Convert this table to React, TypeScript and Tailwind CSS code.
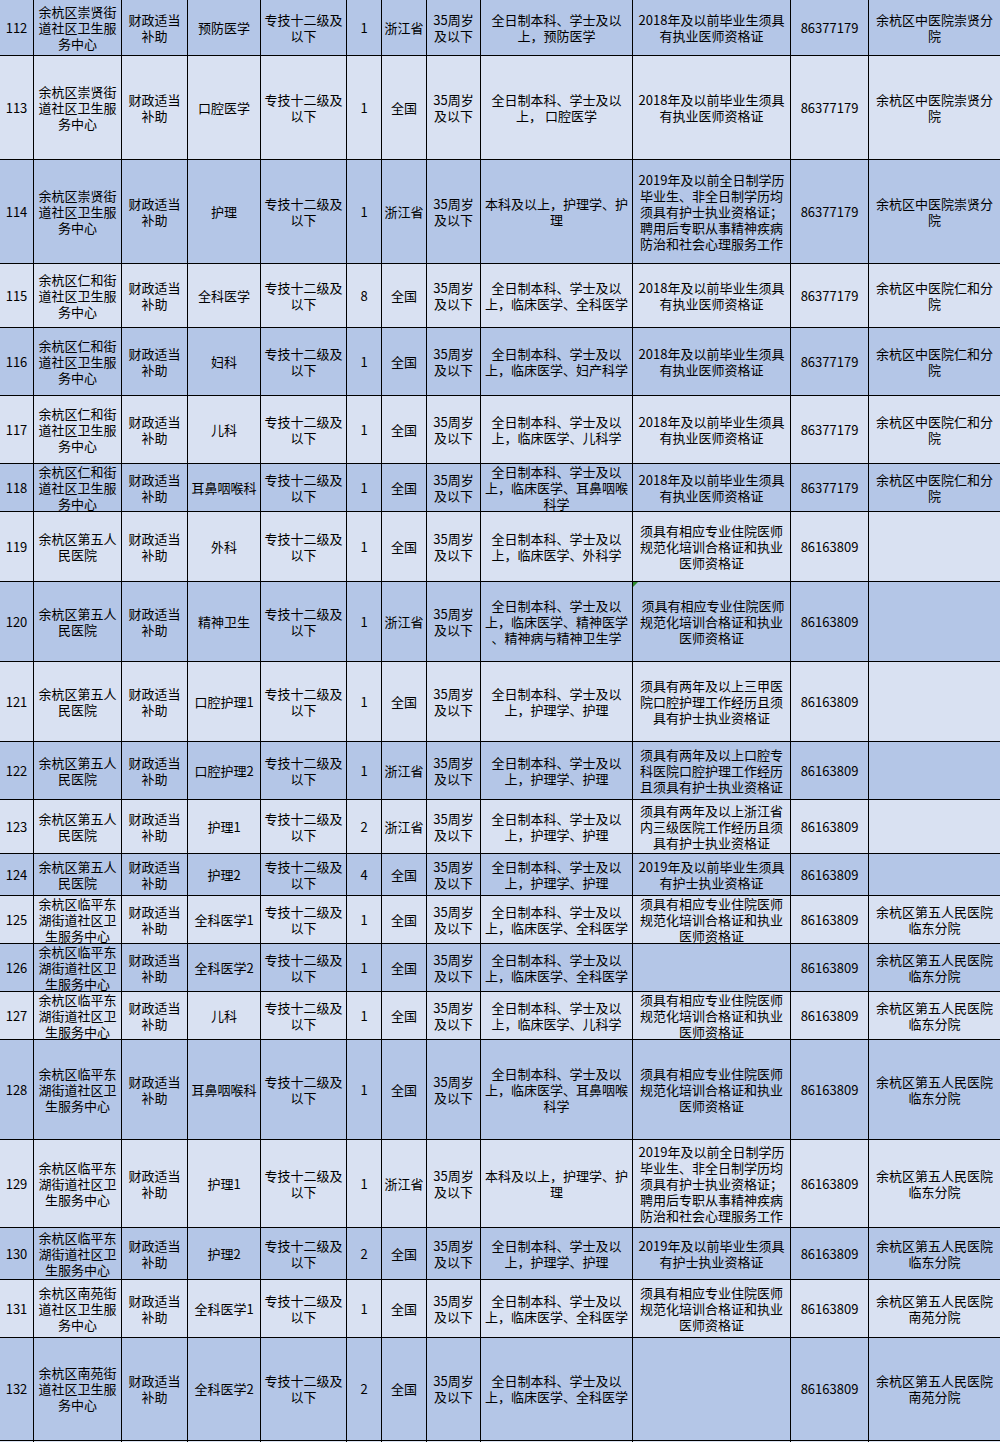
type Row = {
  h: number;
  dark: boolean;
  cells: string[];
  mark?: boolean;
};

const COLS = 'grid-cols-[34px_88px_66px_73px_86px_35px_45px_54px_152px_158px_78px_131px]';

const unitCX = '余杭区崇贤街\n道社区卫生服\n务中心';
const unitRH = '余杭区仁和街\n道社区卫生服\n务中心';
const unit5 = '余杭区第五人\n民医院';
const unitLP = '余杭区临平东\n湖街道社区卫\n生服务中心';
const unitNY = '余杭区南苑街\n道社区卫生服\n务中心';
const fund = '财政适当\n补助';
const level = '专技十二级及\n以下';
const age = '35周岁\n及以下';
const lic18 = '2018年及以前毕业生须具\n有执业医师资格证';
const guipei = '须具有相应专业住院医师\n规范化培训合格证和执业\n医师资格证';
const psych = '2019年及以前全日制学历\n毕业生、非全日制学历均\n须具有护士执业资格证；\n聘用后专职从事精神疾病\n防治和社会心理服务工作';
const nurse = '全日制本科、学士及以\n上，护理学、护理';
const gp = '全日制本科、学士及以\n上，临床医学、全科医学';
const tel1 = '86377179';
const tel2 = '86163809';
const cx = '余杭区中医院崇贤分\n院';
const rh = '余杭区中医院仁和分\n院';
const ld = '余杭区第五人民医院\n临东分院';
const ny = '余杭区第五人民医院\n南苑分院';

const rows: Row[] = [
  { h: 56, dark: true, cells: ['112', unitCX, fund, '预防医学', level, '1', '浙江省', age, '全日制本科、学士及以\n上，预防医学', lic18, tel1, cx] },
  { h: 104, dark: false, cells: ['113', unitCX, fund, '口腔医学', level, '1', '全国', age, '全日制本科、学士及以\n上， 口腔医学', lic18, tel1, cx] },
  { h: 104, dark: true, cells: ['114', unitCX, fund, '护理', level, '1', '浙江省', age, '本科及以上，护理学、护\n理', psych, tel1, cx] },
  { h: 64, dark: false, cells: ['115', unitRH, fund, '全科医学', level, '8', '全国', age, gp, lic18, tel1, rh] },
  { h: 68, dark: true, cells: ['116', unitRH, fund, '妇科', level, '1', '全国', age, '全日制本科、学士及以\n上，临床医学、妇产科学', lic18, tel1, rh] },
  { h: 68, dark: false, cells: ['117', unitRH, fund, '儿科', level, '1', '全国', age, '全日制本科、学士及以\n上，临床医学、儿科学', lic18, tel1, rh] },
  { h: 48, dark: true, cells: ['118', unitRH, fund, '耳鼻咽喉科', level, '1', '全国', age, '全日制本科、学士及以\n上，临床医学、耳鼻咽喉\n科学', lic18, tel1, rh] },
  { h: 70, dark: false, cells: ['119', unit5, fund, '外科', level, '1', '全国', age, '全日制本科、学士及以\n上，临床医学、外科学', guipei, tel2, ''] },
  { h: 80, dark: true, mark: true, cells: ['120', unit5, fund, '精神卫生', level, '1', '浙江省', age, '全日制本科、学士及以\n上，临床医学、精神医学\n、精神病与精神卫生学', ' 须具有相应专业住院医师\n规范化培训合格证和执业\n医师资格证', tel2, ''] },
  { h: 80, dark: false, cells: ['121', unit5, fund, '口腔护理1', level, '1', '全国', age, nurse, '须具有两年及以上三甲医\n院口腔护理工作经历且须\n具有护士执业资格证', tel2, ''] },
  { h: 58, dark: true, cells: ['122', unit5, fund, '口腔护理2', level, '1', '浙江省', age, nurse, '须具有两年及以上口腔专\n科医院口腔护理工作经历\n且须具有护士执业资格证', tel2, ''] },
  { h: 54, dark: false, cells: ['123', unit5, fund, '护理1', level, '2', '浙江省', age, nurse, '须具有两年及以上浙江省\n内三级医院工作经历且须\n具有护士执业资格证', tel2, ''] },
  { h: 42, dark: true, cells: ['124', unit5, fund, '护理2', level, '4', '全国', age, nurse, '2019年及以前毕业生须具\n有护士执业资格证', tel2, ''] },
  { h: 48, dark: false, cells: ['125', unitLP, fund, '全科医学1', level, '1', '全国', age, gp, guipei, tel2, ld] },
  { h: 48, dark: true, cells: ['126', unitLP, fund, '全科医学2', level, '1', '全国', age, gp, '', tel2, ld] },
  { h: 48, dark: false, cells: ['127', unitLP, fund, '儿科', level, '1', '全国', age, '全日制本科、学士及以\n上，临床医学、儿科学', guipei, tel2, ld] },
  { h: 100, dark: true, cells: ['128', unitLP, fund, '耳鼻咽喉科', level, '1', '全国', age, '全日制本科、学士及以\n上，临床医学、耳鼻咽喉\n科学', guipei, tel2, ld] },
  { h: 88, dark: false, cells: ['129', unitLP, fund, '护理1', level, '1', '浙江省', age, '本科及以上，护理学、护\n理', psych, tel2, ld] },
  { h: 52, dark: true, cells: ['130', unitLP, fund, '护理2', level, '2', '全国', age, nurse, '2019年及以前毕业生须具\n有护士执业资格证', tel2, ld] },
  { h: 58, dark: false, cells: ['131', unitNY, fund, '全科医学1', level, '1', '全国', age, gp, guipei, tel2, ny] },
  { h: 103, dark: true, cells: ['132', unitNY, fund, '全科医学2', level, '2', '全国', age, gp, '', tel2, ny] },
  { h: 20, dark: false, cells: ['', '', '', '', '', '', '', '', '', '', '', ''] },
];

function Cell({ text, last, mark }: { text: string; last: boolean; mark?: boolean }) {
  return (
    <div
      className={
        'relative flex items-center justify-center text-center overflow-visible ' +
        (last ? '' : 'border-r border-black')
      }
    >
      {mark && (
        <div className="absolute left-0 top-0 w-0 h-0 border-t-[5px] border-r-[5px] border-t-[#2e8b2e] border-r-transparent" />
      )}
      <div className="whitespace-pre leading-[16px]">{text}</div>
    </div>
  );
}

export default function App() {
  return (
    <div
      className="w-[1000px] h-[1442px] overflow-hidden bg-white text-[13px] text-black"
      style={{ fontFamily: '"Noto Sans CJK SC", "Noto Sans", sans-serif' }}
    >
      {rows.map((r, i) => (
        <div
          key={i}
          className={
            'grid border-b border-black ' +
            COLS +
            ' ' +
            (r.dark ? 'bg-[#b4c6e7]' : 'bg-[#d9e1f2]')
          }
          style={{ height: r.h }}
        >
          {r.cells.map((c, j) => (
            <Cell key={j} text={c} last={j === r.cells.length - 1} mark={r.mark && j === 9} />
          ))}
        </div>
      ))}
    </div>
  );
}
